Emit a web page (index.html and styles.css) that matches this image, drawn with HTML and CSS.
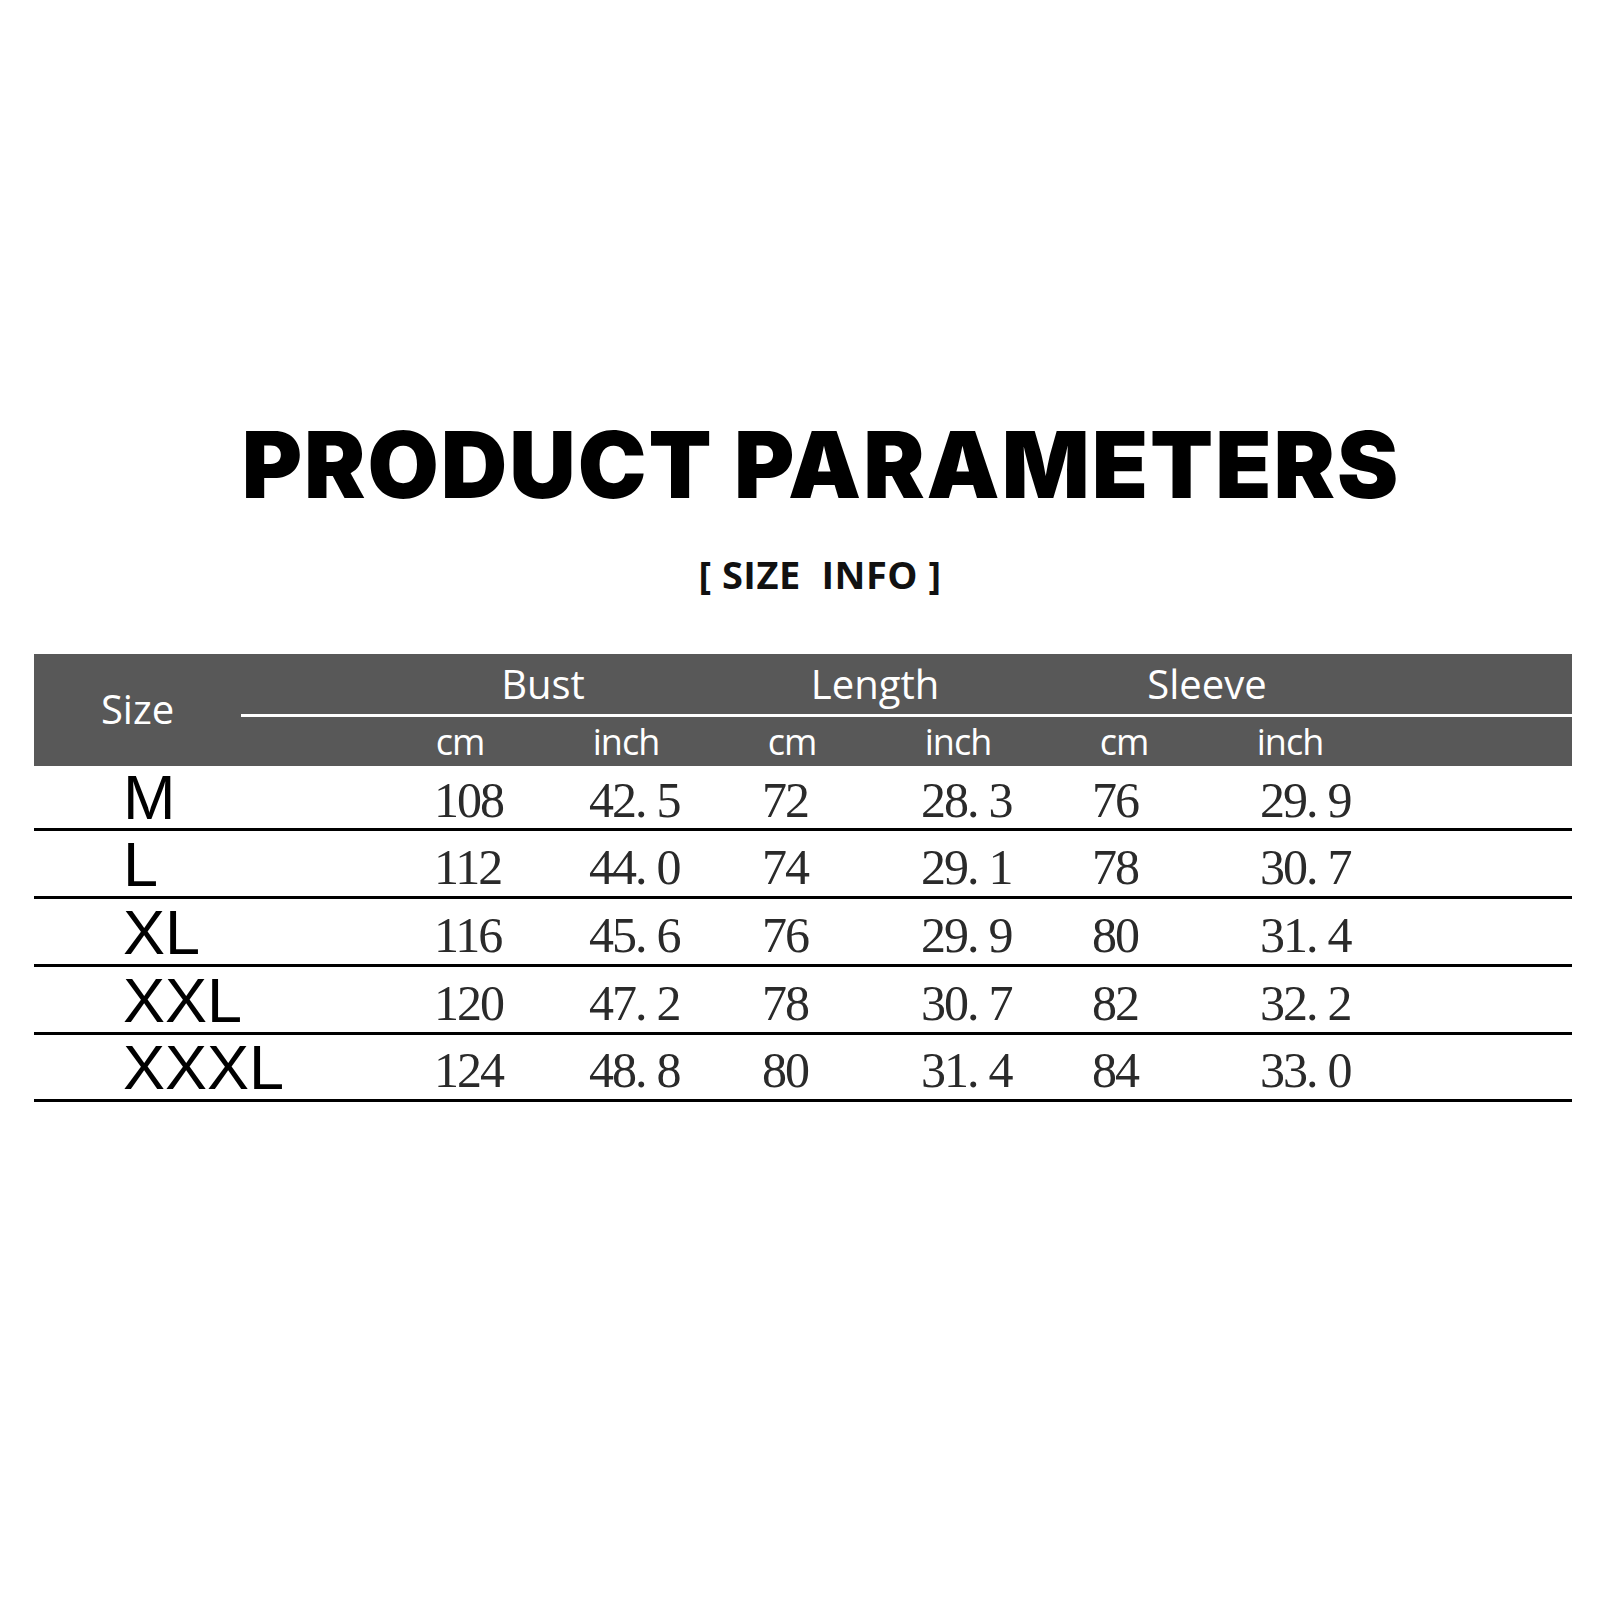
FILE: index.html
```html
<!DOCTYPE html>
<html lang="en">
<head>
<meta charset="utf-8">
<title>Product Parameters</title>
<link rel="stylesheet" href="styles.css">
</head>
<body>
<div class="page">
  <h1 class="title">PRODUCT PARAMETERS</h1>
  <div class="subtitle">[ SIZE&nbsp; INFO ]</div>
  <div class="table">
    <div class="thead">
      <div class="h-size">Size</div>
      <div class="h-group g1">Bust</div>
      <div class="h-group g2">Length</div>
      <div class="h-group g3">Sleeve</div>
      <div class="h-rule"></div>
      <div class="h-unit u1">cm</div>
      <div class="h-unit u2">inch</div>
      <div class="h-unit u3">cm</div>
      <div class="h-unit u4">inch</div>
      <div class="h-unit u5">cm</div>
      <div class="h-unit u6">inch</div>
    </div>
    <div class="row">
      <div class="lbl">M</div>
      <div class="num">108</div>
      <div class="num">42<span class="dot">.</span>5</div>
      <div class="num">72</div>
      <div class="num">28<span class="dot">.</span>3</div>
      <div class="num">76</div>
      <div class="num">29<span class="dot">.</span>9</div>
    </div>
    <div class="row">
      <div class="lbl">L</div>
      <div class="num">112</div>
      <div class="num">44<span class="dot">.</span>0</div>
      <div class="num">74</div>
      <div class="num">29<span class="dot">.</span>1</div>
      <div class="num">78</div>
      <div class="num">30<span class="dot">.</span>7</div>
    </div>
    <div class="row">
      <div class="lbl">XL</div>
      <div class="num">116</div>
      <div class="num">45<span class="dot">.</span>6</div>
      <div class="num">76</div>
      <div class="num">29<span class="dot">.</span>9</div>
      <div class="num">80</div>
      <div class="num">31<span class="dot">.</span>4</div>
    </div>
    <div class="row">
      <div class="lbl">XXL</div>
      <div class="num">120</div>
      <div class="num">47<span class="dot">.</span>2</div>
      <div class="num">78</div>
      <div class="num">30<span class="dot">.</span>7</div>
      <div class="num">82</div>
      <div class="num">32<span class="dot">.</span>2</div>
    </div>
    <div class="row">
      <div class="lbl">XXXL</div>
      <div class="num">124</div>
      <div class="num">48<span class="dot">.</span>8</div>
      <div class="num">80</div>
      <div class="num">31<span class="dot">.</span>4</div>
      <div class="num">84</div>
      <div class="num">33<span class="dot">.</span>0</div>
    </div>
  </div>
</div>
</body>
</html>
```
FILE: styles.css
```css
html, body {
  margin: 0;
  padding: 0;
  background: #ffffff;
}

.page {
  width: 1610px;
  height: 1610px;
  padding-top: 419px;
  box-sizing: border-box;
}

.title {
  margin: 0;
  padding-left: 32px;
  text-align: center;
  font-family: Inter, "Liberation Sans", sans-serif;
  font-weight: 900;
  font-size: 92px;
  letter-spacing: 2px;
  line-height: 1;
  color: #000;
}

.subtitle {
  margin-top: 44px;
  padding-left: 30px;
  text-align: center;
  font-family: "Open Sans", "Liberation Sans", sans-serif;
  font-weight: 700;
  font-size: 38px;
  letter-spacing: 0.5px;
  line-height: 1;
  color: #111;
}

.table {
  margin-top: 61px;
  margin-left: 34px;
  width: 1538px;
}

.thead {
  display: grid;
  grid-template-columns: 207px 136px repeat(6, 166px) 1fr;
  grid-template-rows: 60px 3px 49px;
  background: #585858;
  color: #fff;
  font-family: "Open Sans", "Liberation Sans", sans-serif;
}

.h-size {
  grid-column: 1;
  grid-row: 1 / 4;
  display: flex;
  align-items: center;
  justify-content: center;
  font-size: 40px;
  padding-bottom: 4px;
}

.h-group {
  grid-row: 1;
  display: flex;
  align-items: center;
  justify-content: center;
  font-size: 40px;
  padding-bottom: 2px;
}

.g1 { grid-column: 3 / 5; }
.g2 { grid-column: 5 / 7; }
.g3 { grid-column: 7 / 9; }

.h-rule {
  grid-column: 2 / -1;
  grid-row: 2;
  background: #ffffff;
}

.h-unit {
  grid-row: 3;
  display: flex;
  align-items: center;
  justify-content: center;
  font-size: 36px;
  letter-spacing: -1px;
}

.u1 { grid-column: 3; }
.u2 { grid-column: 4; }
.u3 { grid-column: 5; }
.u4 { grid-column: 6; }
.u5 { grid-column: 7; }
.u6 { grid-column: 8; }

.row {
  display: grid;
  grid-template-columns: 400px 155px 173px 159px 171px 168px 1fr;
  height: 65px;
  border-bottom: 3px solid #000;
  align-items: end;
}

.thead + .row {
  height: 62px;
}

.row:last-child {
  height: 64px;
}

.lbl {
  padding-left: 89px;
  font-family: "Liberation Sans", Arial, sans-serif;
  font-size: 63px;
  line-height: 1;
  color: #000;
}

.num {
  padding-bottom: 4px;
  font-family: "Liberation Serif", "Times New Roman", serif;
  font-size: 50px;
  line-height: 1;
  letter-spacing: -2px;
  color: #2a2a2a;
}

.dot {
  margin-right: 11px;
}
```
